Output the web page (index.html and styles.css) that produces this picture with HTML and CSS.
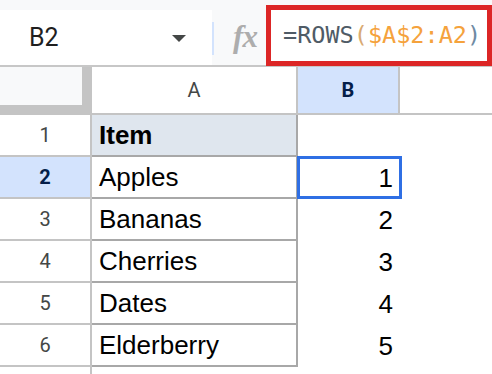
FILE: index.html
```html
<!DOCTYPE html>
<html lang="en">
<head>
  <meta charset="UTF-8" />
  <title>Sheet - ROWS</title>
  <link rel="stylesheet" href="styles.css">
</head>
<body>

  <div class="toolbar">
    <div class="namebox">
      <span class="ref">B2</span>
      <span class="caret"></span>
    </div>
    <div class="divider"></div>
    <div class="fx">fx</div>
    <div class="formula">
      <span class="fn">=ROWS</span><span class="paren-open">(</span><span class="range">$A$2:A2</span><span class="paren-close">)</span>
    </div>
  </div>

  <div class="sheet">
    <div class="corner"></div>
    <div class="col-head">A</div>
    <div class="col-head selected">B</div>
    <div class="col-head rest"></div>

    <div class="row-head">1</div>
    <div class="cell title">Item</div>
    <div class="num"></div>
    <div></div>

    <div class="row-head selected">2</div>
    <div class="cell">Apples</div>
    <div class="num active">1</div>
    <div></div>

    <div class="row-head">3</div>
    <div class="cell">Bananas</div>
    <div class="num">2</div>
    <div></div>

    <div class="row-head">4</div>
    <div class="cell">Cherries</div>
    <div class="num">3</div>
    <div></div>

    <div class="row-head">5</div>
    <div class="cell">Dates</div>
    <div class="num">4</div>
    <div></div>

    <div class="row-head">6</div>
    <div class="cell">Elderberry</div>
    <div class="num">5</div>
    <div></div>

    <div class="row-head last"></div>
  </div>

</body>
</html>
```

FILE: styles.css
```css
* {
  box-sizing: border-box;
}

body {
  margin: 0;
  height: 100vh;
  overflow: hidden;
  background: #fff;
  font-family: "Liberation Sans", Arial, sans-serif;
  color: #000;
  display: flex;
  flex-direction: column;
}

/* formula bar */
.toolbar {
  display: flex;
  height: 67px;
  background: #f8f9fa;
  border-bottom: 2px solid #c7c7c7;
}

.namebox {
  width: 212px;
  margin-top: 10px;
  background: #fff;
  display: flex;
  align-items: center;
  padding-left: 29px;
  padding-right: 26px;
}

.ref {
  font-family: Roboto, sans-serif;
  font-size: 25px;
  color: #1f1f1f;
}

.caret {
  margin-left: auto;
  width: 0;
  height: 0;
  border-left: 7px solid transparent;
  border-right: 7px solid transparent;
  border-top: 7px solid #444746;
  margin-top: 2px;
}

.divider {
  width: 2px;
  height: 33px;
  margin-top: 22px;
  background: #d3e3fd;
}

.fx {
  width: 52px;
  display: flex;
  align-items: center;
  justify-content: center;
  padding-left: 10px;
  padding-top: 8px;
  font-family: "Liberation Serif", serif;
  font-style: italic;
  font-weight: bold;
  font-size: 31px;
  color: #adadad;
  letter-spacing: -1px;
}

.formula {
  flex: 1;
  margin-top: 5px;
  height: 61px;
  border: 5px solid #dc2626;
  background: #fff;
  display: flex;
  align-items: center;
  padding-left: 12px;
  padding-bottom: 2px;
  font-family: "DejaVu Sans Mono", monospace;
  font-size: 23.5px;
  white-space: nowrap;
}

.fn {
  color: #4f5b66;
}

.paren-open {
  color: #d9aa72;
}

.range {
  color: #f5a23c;
}

.paren-close {
  color: #6e8aa3;
}

/* grid */
.sheet {
  flex: 1;
  display: grid;
  grid-template-columns: 92px 206px 102px 1fr;
  grid-template-rows: 48px repeat(6, 42px) 1fr;
}

.corner {
  background: #f8f9fa;
  border-right: 10px solid #c4c4c4;
  border-bottom: 10px solid #c4c4c4;
}

.col-head {
  display: flex;
  align-items: center;
  justify-content: center;
  border-right: 2px solid #c4c4c4;
  border-bottom: 2px solid #c4c4c4;
  font-family: Roboto, sans-serif;
  font-size: 20px;
  color: #444746;
}

.col-head.selected {
  background: #d3e3fd;
  color: #041e49;
  font-weight: bold;
}

.col-head.rest {
  border-right: none;
}

.row-head {
  display: flex;
  align-items: center;
  justify-content: center;
  border-right: 2px solid #c4c4c4;
  border-bottom: 2px solid #c4c4c4;
  font-family: Roboto, sans-serif;
  font-size: 20px;
  color: #444746;
}

.row-head.selected {
  background: #d3e3fd;
  color: #041e49;
  font-weight: bold;
}

.row-head.last {
  border-bottom: none;
}

.cell {
  display: flex;
  align-items: center;
  padding-left: 7px;
  border-right: 2px solid #a8a8a8;
  border-bottom: 2px solid #a8a8a8;
  font-size: 26px;
}

.cell.title {
  background: #dfe6ee;
  font-weight: bold;
}

.num {
  display: flex;
  align-items: center;
  justify-content: flex-end;
  padding-right: 7px;
  font-size: 26px;
}

.num.active {
  position: relative;
}

.num.active::after {
  content: "";
  position: absolute;
  top: -1px;
  left: -1px;
  right: -2px;
  bottom: 0;
  border: 3px solid #2f6fe4;
}
```
